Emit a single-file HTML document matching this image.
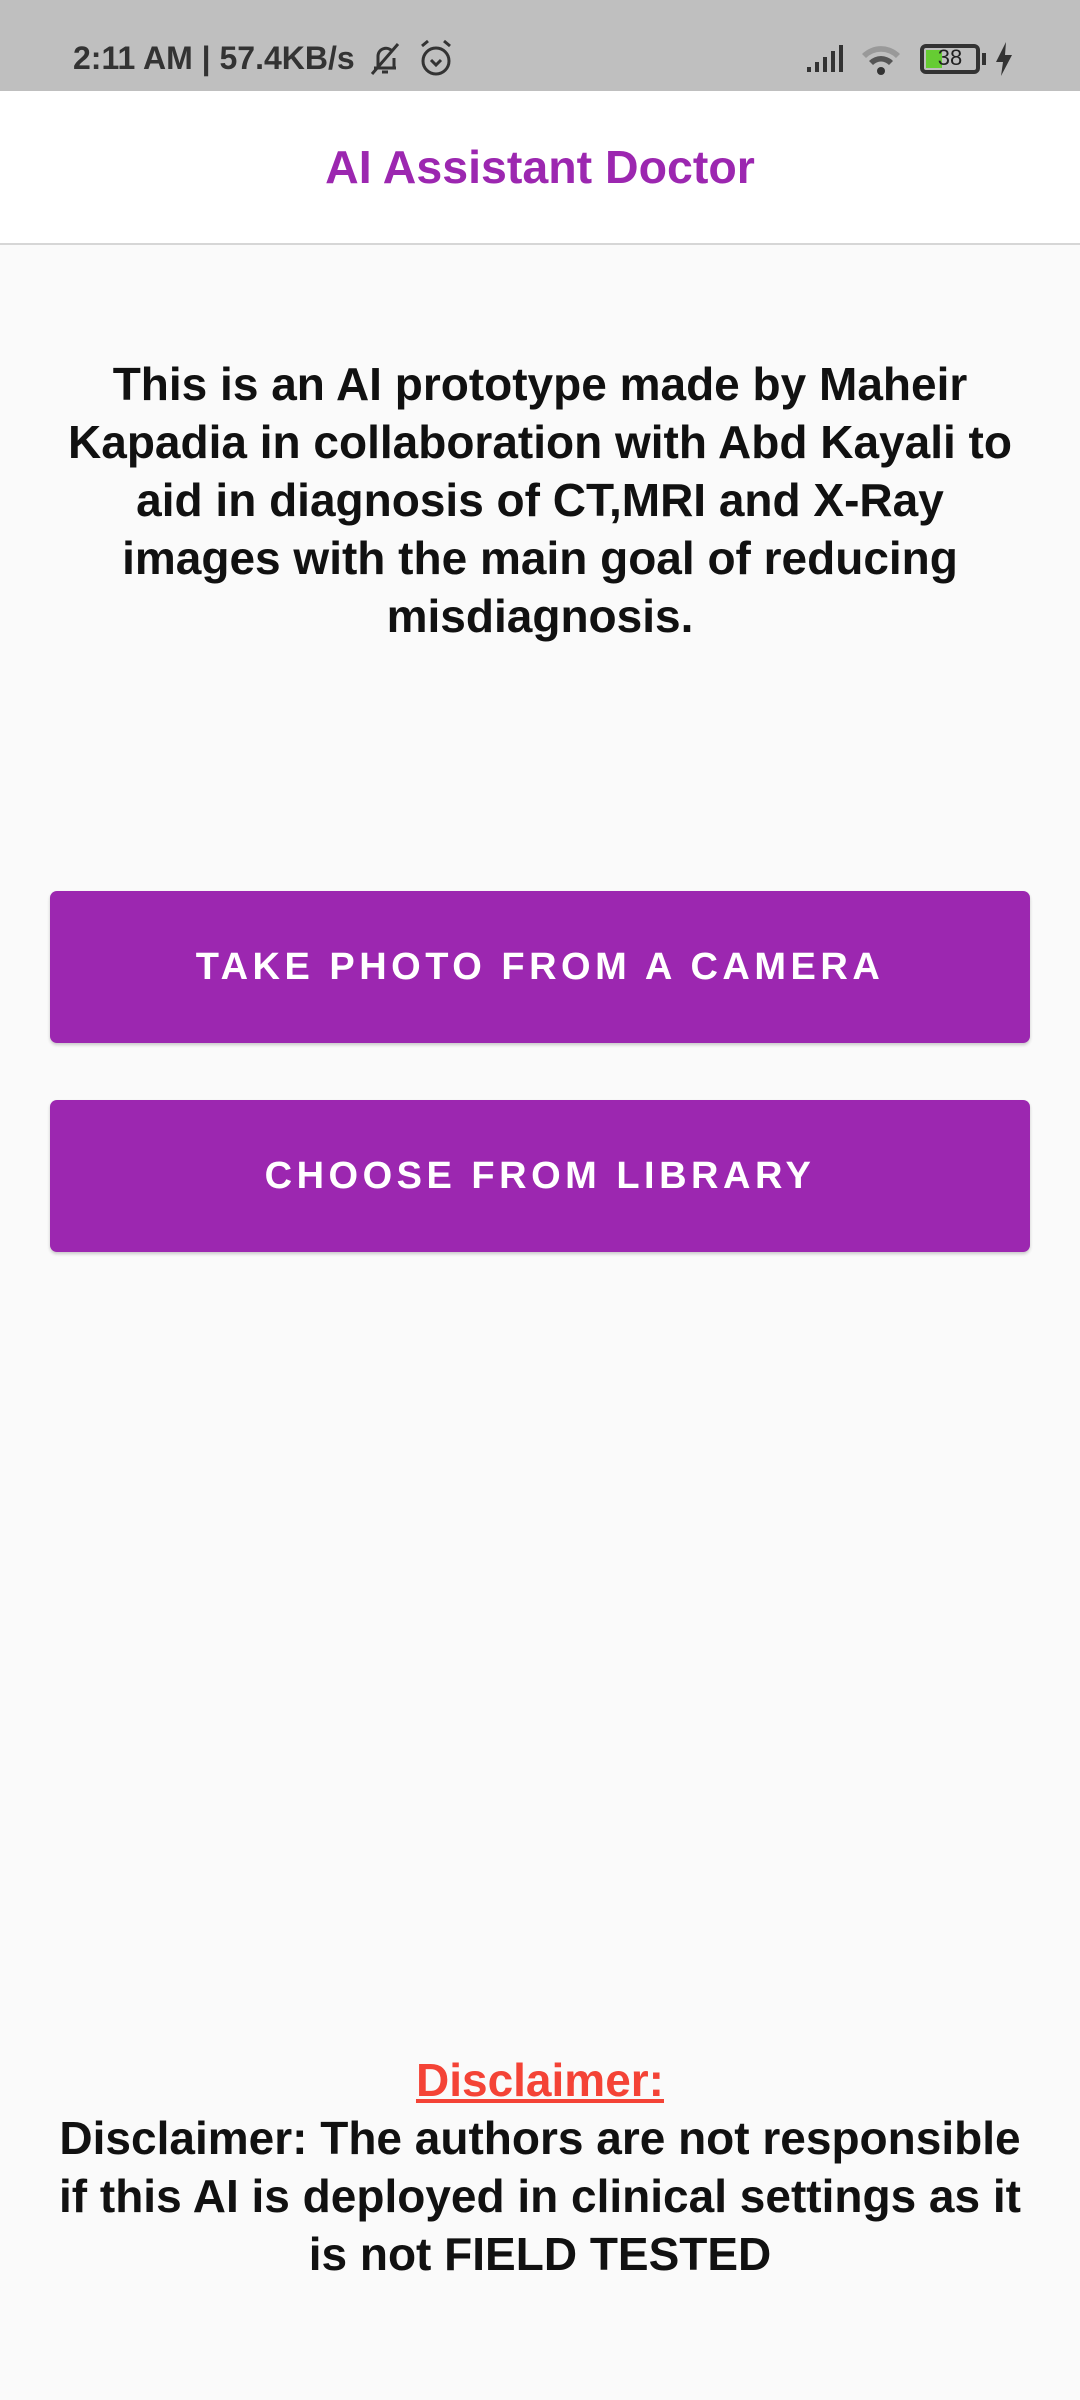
<!DOCTYPE html>
<html><head><meta charset="utf-8"><style>
*{margin:0;padding:0;box-sizing:border-box}
body{width:1080px;height:2400px;background:#fafafa;font-family:"Liberation Sans",sans-serif;position:relative;overflow:hidden}
.sb{position:absolute;left:0;top:0;width:1080px;height:91px;background:#bfbfbf;color:#333}
.hdr{position:absolute;left:0;top:91px;width:1080px;height:154px;background:#fff;border-bottom:2px solid #d6d6d6}
.t{position:absolute;left:0;width:1080px;text-align:center;white-space:nowrap}
.btn{position:absolute;left:50px;width:980px;height:152px;background:#9c27b0;border-radius:7px;color:#fff;font-size:38px;font-weight:bold;letter-spacing:4.5px;display:flex;align-items:center;justify-content:center;box-shadow:0 2px 3px rgba(0,0,0,.2)}
</style></head><body>
<div class="sb">
<div style="position:absolute;left:73px;top:40px;font-size:32px;font-weight:bold;letter-spacing:0px">2:11 AM | 57.4KB/s</div>
<svg style="position:absolute;left:366px;top:40px" width="40" height="38" viewBox="0 0 40 38"><path d="M8 28h22M12 28V16a8 8 0 0 1 14-5M28 18v10M16 32h6M6 34L32 4" stroke="#333" stroke-width="3" fill="none"/></svg>
<svg style="position:absolute;left:418px;top:38px" width="36" height="40" viewBox="0 0 36 40"><circle cx="18" cy="23" r="13" stroke="#333" stroke-width="3" fill="none"/><path d="M13 22l5 5 5-5M4 8l6-5M32 8l-6-5" stroke="#333" stroke-width="3" fill="none"/></svg>
<svg style="position:absolute;left:805px;top:44px" width="40" height="30" viewBox="0 0 40 30"><path d="M2 28h4v-5h-4zM10 28h4v-10h-4zM18 28h4v-15h-4zM26 28h4v-21h-4zM34 28h4v-27h-4z" fill="#333"/></svg>
<svg style="position:absolute;left:860px;top:42px" width="42" height="34" viewBox="0 0 42 34"><path d="M2 12a27 27 0 0 1 38 0l-4 4a21 21 0 0 0-30 0z" fill="#999"/><path d="M9 19a17 17 0 0 1 24 0l-4 4a11 11 0 0 0-16 0z" fill="#555"/><circle cx="21" cy="29" r="4" fill="#333"/></svg>
<div style="position:absolute;left:920px;top:44px;width:60px;height:30px;border:4px solid #333;border-radius:6px"><div style="position:absolute;left:2px;top:2px;width:16px;height:18px;background:#6c3"></div><div style="position:absolute;left:0;top:-3px;width:52px;text-align:center;font-size:22px;color:#222">38</div></div>
<div style="position:absolute;left:982px;top:53px;width:4px;height:12px;background:#333"></div>
<svg style="position:absolute;left:994px;top:42px" width="20" height="34" viewBox="0 0 20 34"><path d="M12 0L2 20h7l-2 14 11-21h-7z" fill="#333"/></svg>
</div>
<div class="hdr"><div class="t" style="top:49px;font-size:46.5px;font-weight:bold;color:#9c27b0">AI Assistant Doctor</div></div>
<div class="t" style="top:355px;font-size:46px;font-weight:bold;line-height:58px;color:#111">This is an AI prototype made by Maheir<br>Kapadia in collaboration with Abd Kayali to<br>aid in diagnosis of CT,MRI and X-Ray<br>images with the main goal of reducing<br>misdiagnosis.</div>
<div class="btn" style="top:891px">TAKE PHOTO FROM A CAMERA</div>
<div class="btn" style="top:1100px">CHOOSE FROM LIBRARY</div>
<div class="t" style="top:2053px;font-size:46px;font-weight:bold;color:#f44336;text-decoration:underline">Disclaimer:</div>
<div class="t" style="top:2109px;font-size:46px;font-weight:bold;line-height:58px;color:#111">Disclaimer: The authors are not responsible<br>if this AI is deployed in clinical settings as it<br>is not FIELD TESTED</div>
</body></html>
